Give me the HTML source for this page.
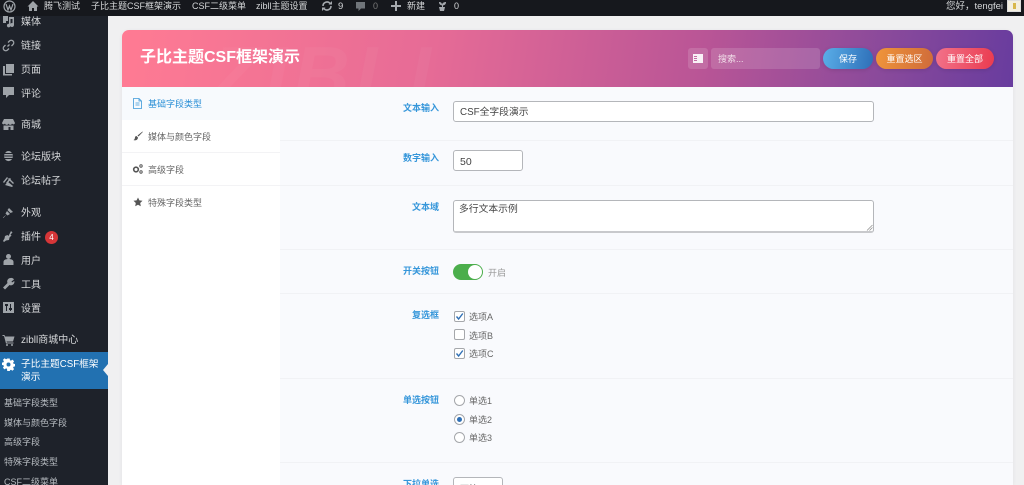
<!DOCTYPE html>
<html lang="zh"><head><meta charset="utf-8"><title>子比主题CSF框架演示</title>
<style>
*{box-sizing:border-box}
html,body{margin:0;padding:0;width:1024px;height:485px;overflow:hidden}
body{position:relative;background:#f0f0f1;font-family:"Liberation Sans","Noto Sans CJK SC",sans-serif;font-size:9.5px;color:#444}
#wrap{position:absolute;left:0;top:0;width:1024px;height:485px;overflow:hidden;filter:blur(.3px)}
.a{position:absolute;white-space:nowrap}
#bar{left:0;top:0;width:1024px;height:16px;background:#16181d;overflow:hidden}
#bar .a{color:#d4d6d8;font-size:9px;line-height:13px;top:0}
#side{left:0;top:16px;width:108px;height:469px;background:#1e222a;overflow:hidden}
.m{left:21px;color:#d5d7d9;font-size:10px;line-height:14px;margin-top:2px}
.ic{position:absolute;left:2px;width:13px;height:13px;fill:#9ea3a8}
.s{left:4px;color:#b6bbc0;font-size:9px;line-height:13px}
#panel{left:122px;top:30px;width:891px;height:455px;background:#f9fafd;border-radius:7px 7px 0 0;overflow:hidden;box-shadow:0 1px 4px rgba(0,0,0,.06)}
#head{left:0;top:0;width:891px;height:57px;background:linear-gradient(99deg,#ff7b93 0%,#e66b96 35%,#b95596 65%,#8a4a9b 85%,#683c9e 100%);overflow:hidden}
#nav{left:0;top:57px;width:158px;height:400px;background:#fff}
.n{left:26px;font-size:9px;line-height:13px;color:#666;margin-top:1px}
.l{right:0;font-size:9px;font-weight:bold;color:#3596da;line-height:13px;text-align:right;margin-top:1px}
.in{background:#fff;border:1px solid #b4b6ba;border-radius:3px;color:#444;font-size:9.8px;position:absolute}
.sep{left:158px;width:733px;height:1px;background:#f1f2f5}
.opt{left:347px;font-size:9px;color:#666;line-height:13px;margin-top:1px}
.cb{position:absolute;left:332px;width:11px;height:11px;background:#fff;border:1px solid #a5a7ab;border-radius:2px}
.cb svg{position:absolute;left:0;top:0}
.rd{position:absolute;left:332px;width:11px;height:11px;background:#fff;border:1px solid #a5a7ab;border-radius:50%}
.btn{height:21px;top:18px;border-radius:11px;color:#fff;font-size:9px;line-height:23px;text-align:center;box-shadow:0 1px 4px rgba(0,0,0,.12)}
</style></head><body><div id="wrap">

<div class="a" id="bar">
<svg class="a" style="left:3px;top:0" width="13" height="13" viewBox="0 0 13 13"><circle cx="6.500" cy="6.500" r="5.500" fill="none" stroke="#9ea3a8" stroke-width="1.200"/><path d="M3 4l2 6 1.500-4 1.500 4 2-6" fill="none" stroke="#9ea3a8" stroke-width="1.200"/></svg>
<svg class="a" style="left:27px;top:0" width="12" height="12" viewBox="0 0 12 12"><path d="M6 1L.5 6.500H2V11h3V8h2v3h3V6.500h1.500z" fill="#9ea3a8"/></svg>
<span class="a" style="left:44px">腾飞测试</span>
<span class="a" style="left:91px">子比主题CSF框架演示</span>
<span class="a" style="left:192px">CSF二级菜单</span>
<span class="a" style="left:256px">zibll主题设置</span>
<svg class="a" style="left:321px;top:0" width="12" height="12" viewBox="0 0 12 12"><path d="M2 6a4 4 0 0 1 7-2.600M10 6a4 4 0 0 1-7 2.600" fill="none" stroke="#a5a9ae" stroke-width="1.600"/><path d="M7.500 4.500h3.500V1zM4.500 7.500H1V11z" fill="#a5a9ae"/></svg>
<span class="a" style="left:338px;font-size:9.500px">9</span>
<svg class="a" style="left:355px;top:1px" width="11" height="11" viewBox="0 0 11 11"><path d="M1 1h9v6.500H6L3.500 10V7.500H1z" fill="#70757a"/></svg>
<span class="a" style="left:373px;color:#777">0</span>
<svg class="a" style="left:391px;top:1px" width="10" height="10" viewBox="0 0 10 10"><path d="M4 0h2v4h4v2H6v4H4V6H0V4h4z" fill="#a5a9ae"/></svg>
<span class="a" style="left:407px">新建</span>
<svg class="a" style="left:437px;top:1px" width="10" height="11" viewBox="0 0 10 11"><path d="M2 1c2 0 3 1 3 3C5 2 7 1 9 1c0 2-1 3-3 3.500V6h2l-1 4H3L2 6h3V4.500C3 4 2 3 2 1z" fill="#a5a9ae"/></svg>
<span class="a" style="left:454px">0</span>
<span class="a" style="left:946px;font-size:9.500px">您好，tengfei</span>
<div class="a" style="left:1007px;top:0;width:14px;height:12px;background:#f3efe0;border:1px solid #ddd"><div style="position:absolute;left:5px;top:2px;width:3px;height:6px;background:#d8b84c"></div></div>
</div>

<div class="a" id="side">
<svg class="ic" style="top:-1px" viewBox="0 0 13 13"><path d="M1 1h5v5H4v2H1zM7 2h5v8a2 2 0 1 1-1.500-1.900V4H8.500v6.500a1.800 1.800 0 1 1-1.500-1.700z"/></svg><span class="a m" style="top:-2px">媒体</span>
<svg class="ic" style="top:23px" viewBox="0 0 13 13"><path d="M5.500 7.500l2-2M6 3.500l1.500-1.500a2.400 2.400 0 0 1 3.500 3.500L9.500 7M7 9.500L5.500 11A2.400 2.400 0 0 1 2 7.500L3.500 6" fill="none" stroke="#9ea3a8" stroke-width="1.300"/></svg><span class="a m" style="top:22px">链接</span>
<svg class="ic" style="top:47px" viewBox="0 0 13 13"><path d="M4 1h8v9H4z"/><path d="M1 3h2v8h7v1.500H1z"/></svg><span class="a m" style="top:46px">页面</span>
<svg class="ic" style="top:70px" viewBox="0 0 13 13"><path d="M1 1h11v8H7l-3 3V9H1z"/></svg><span class="a m" style="top:70px">评论</span>
<svg class="ic" style="top:102px" viewBox="0 0 13 13"><path d="M2 1h9l2 4a1.600 1.600 0 0 1-3 .5 1.800 1.800 0 0 1-3.500 0 1.800 1.800 0 0 1-3.500 0 1.600 1.600 0 0 1-3-.5z"/><path d="M1.500 7.500h10V12h-3V9h-2v3h-5z"/></svg><span class="a m" style="top:101px">商城</span>
<svg class="ic" style="top:134px" viewBox="0 0 13 13"><path d="M6.500 1a4 4 0 0 1 3.300 2H3.200A4 4 0 0 1 6.500 1zM2.500 4h8l.5 1.500H2zM2 6.500h9l-.5 1.500h-8zM3 9h7a4 4 0 0 1-7 0z"/></svg><span class="a m" style="top:133px">论坛版块</span>
<svg class="ic" style="top:158px" viewBox="0 0 13 13"><path d="M1 8l4-5 1 1-4 5zM4 9l4-5 1 1-4 5zM3 11l1-1 2-2 5 4-1 1z M7 4l5 5-1 1-5-5z"/></svg><span class="a m" style="top:157px">论坛帖子</span>
<svg class="ic" style="top:190px" viewBox="0 0 13 13"><path d="M7 2l4 4-2.500 1-3-3zM5 5l3 3-2.500 1.500L4.500 8.500 1.500 12 1 11.500l3.500-3L3.500 7.500z"/></svg><span class="a m" style="top:189px">外观</span>
<svg class="ic" style="top:214px" viewBox="0 0 13 13"><path d="M9 1l1.500 1.500-2 2 1 1-2 2-.5 2.500-3 .5L2 12l-1-1 1.500-2.500L3 6l2.500-1 1 1z"/></svg><span class="a m" style="top:213px">插件</span>
<div class="a" style="left:45px;top:215px;width:13px;height:13px;border-radius:50%;background:#d63638;color:#fff;font-size:8px;line-height:13px;text-align:center">4</div>
<svg class="ic" style="top:237px" viewBox="0 0 13 13"><circle cx="6.500" cy="3.500" r="2.500"/><path d="M1.500 12V9c0-2 2-3 5-3s5 1 5 3v3z"/></svg><span class="a m" style="top:237px">用户</span>
<svg class="ic" style="top:261px" viewBox="0 0 13 13"><path d="M8.500 1a3.500 3.500 0 0 1 3.500 1.500L9.500 4.500 10 5.500 12.300 4a3.500 3.500 0 0 1-4.800 4L3 12.500 1 10.500 5.500 6A3.500 3.500 0 0 1 8.500 1z"/></svg><span class="a m" style="top:261px">工具</span>
<svg class="ic" style="top:285px" viewBox="0 0 13 13"><path fill-rule="evenodd" d="M1 1h11v11H1zM3 3v2h1v5h1V5h1V3zM8 3v4H7v2h1v1h1V9h1V7H9V3z"/></svg><span class="a m" style="top:285px">设置</span>
<svg class="ic" style="top:317px" viewBox="0 0 13 13"><path d="M.5 2h2l.5 1.500h9.500L11 8.500H4.500L5 9.500h6.500V10.500h-7.500L2 3H.5z"/><circle cx="5" cy="12" r="1"/><circle cx="10" cy="12" r="1"/></svg><span class="a m" style="top:316px">zibll商城中心</span>
<div class="a" style="left:0;top:336px;width:108px;height:37px;background:#2271b1"></div>
<svg class="ic" style="top:342px;fill:#fff" viewBox="0 0 13 13"><path fill-rule="evenodd" d="M5.300 .5h2.400l.3 1.700 1 .4 1.400-1 1.700 1.700-1 1.400.4 1 1.700.3v2.400l-1.700.3-.4 1 1 1.400-1.700 1.700-1.400-1-1 .4-.3 1.700H5.300L5 10.800l-1-.4-1.400 1-1.700-1.700 1-1.400-.4-1-1.700-.3V4.600L1.500 4.300l.4-1-1-1.400L2.600.2l1.400 1 1-.4zM6.500 4.500a2 2 0 1 0 0 4 2 2 0 0 0 0-4z"/></svg>
<div class="a" style="left:21px;top:342px;width:84px;color:#fff;font-size:9.700px;line-height:13px;white-space:normal">子比主题CSF框架演示</div>
<div class="a" style="left:103px;top:348px;width:0;height:0;border:6px solid transparent;border-left:0;border-right:5px solid #f0f0f1"></div>
<span class="a s" style="top:381px">基础字段类型</span>
<span class="a s" style="top:401px">媒体与颜色字段</span>
<span class="a s" style="top:420px">高级字段</span>
<span class="a s" style="top:440px">特殊字段类型</span>
<span class="a s" style="top:460px">CSF二级菜单</span>
</div>

<div class="a" id="panel">
<div class="a" id="head">
<div class="a" style="left:90px;top:4px;font-size:78px;font-weight:bold;font-style:italic;color:rgba(255,255,255,.035);letter-spacing:6px;line-height:80px">ZIBLL</div>
<div class="a" style="left:18px;top:17px;color:#fff;font-size:16px;font-weight:bold;line-height:22px">子比主题CSF框架演示</div>
<div class="a" style="left:566px;top:18px;width:20px;height:21px;background:rgba(255,255,255,.14);border-radius:3px"></div>
<svg class="a" style="left:571px;top:24px" width="10" height="9" viewBox="0 0 10 9"><path fill-rule="evenodd" d="M0 0h10v9H0zM4 2H1v1h3zM4 4H1v1h3zM4 6H1v1h3z" fill="#fff" opacity=".9"/></svg>
<div class="a" style="left:589px;top:18px;width:109px;height:21px;background:rgba(255,255,255,.14);border-radius:3px;color:#f1dfe9;font-size:9px;line-height:22px;padding-left:7px">搜索...</div>
<div class="a btn" style="left:701px;width:50px;background:linear-gradient(100deg,#5aaee8,#2e6fb8)">保存</div>
<div class="a btn" style="left:754px;width:57px;background:linear-gradient(100deg,#f0953a,#cf6b3a)">重置选区</div>
<div class="a btn" style="left:814px;width:58px;background:linear-gradient(100deg,#f2728a,#ea3b4f)">重置全部</div>
</div>

<div class="a" id="nav"></div>
<div class="a" style="left:0;top:57px;width:158px;height:33px;background:#f7fafd"></div>
<div class="a" style="left:0;top:122px;width:158px;height:1px;background:#f3f3f5"></div>
<div class="a" style="left:0;top:155px;width:158px;height:1px;background:#f3f3f5"></div>
<svg class="a" style="left:11px;top:68px" width="9" height="11" viewBox="0 0 9 11"><path d="M.5.5h5.500l2.500 2.500v7.500H.500zM6 .5V3h2.500M2.500 5h4M2.500 7h4" fill="none" stroke="#3a98d8" stroke-width=".8"/></svg>
<span class="a n" style="top:67px;color:#2a8fd6">基础字段类型</span>
<svg class="a" style="left:11px;top:101px" width="10" height="10" viewBox="0 0 10 10"><path d="M9.500.5L4.500 4.500l1 1L9.800 1zM3.500 5C2 5 2 6.500 1.800 7.500 1.600 8.500 1 8.800.3 9c2 .8 4.500.3 4.700-2.500z" fill="#555"/></svg>
<span class="a n" style="top:100px">媒体与颜色字段</span>
<svg class="a" style="left:10px;top:134px" width="11" height="10" viewBox="0 0 11 10"><circle cx="4" cy="5.500" r="2.300" fill="none" stroke="#555" stroke-width="1.600"/><circle cx="9" cy="2" r="1.200" fill="none" stroke="#555" stroke-width="1"/><circle cx="9" cy="8" r="1.200" fill="none" stroke="#555" stroke-width="1"/></svg>
<span class="a n" style="top:133px">高级字段</span>
<svg class="a" style="left:11px;top:167px" width="10" height="10" viewBox="0 0 10 10"><path d="M5 .5l1.400 2.900 3.100.4-2.300 2.200.6 3.200L5 7.700 2.200 9.200l.6-3.200L.5 3.800l3.100-.4z" fill="#555"/></svg>
<span class="a n" style="top:166px">特殊字段类型</span>

<div class="a l" style="left:230px;width:87px;top:71px">文本输入</div>
<div class="a in" style="left:331px;top:71px;width:421px;height:21px;line-height:20px;padding:1px 0 0 6px">CSF全字段演示</div>
<div class="a sep" style="top:110px"></div>
<div class="a l" style="left:230px;width:87px;top:121px">数字输入</div>
<div class="a in" style="left:331px;top:120px;width:70px;height:21px;line-height:20px;padding:1px 0 0 6px;font-size:10.500px">50</div>
<div class="a sep" style="top:155px"></div>
<div class="a l" style="left:230px;width:87px;top:170px">文本域</div>
<div class="a in" style="left:331px;top:170px;width:421px;height:33px;line-height:17px;padding-left:5px;border-bottom:2px solid #c8c9cc">多行文本示例
<svg style="position:absolute;right:0;bottom:0" width="7" height="7" viewBox="0 0 7 7"><path d="M1 6.500L6.500 1M3.500 6.500L6.500 3.500" stroke="#888" stroke-width=".7"/></svg></div>
<div class="a sep" style="top:219px"></div>
<div class="a l" style="left:230px;width:87px;top:234px">开关按钮</div>
<div class="a" style="left:331px;top:234px;width:30px;height:16px;border-radius:8px;background:#4cae4c"></div>
<div class="a" style="left:346px;top:235px;width:14px;height:14px;border-radius:50%;background:#fff"></div>
<span class="a" style="left:366px;top:237px;font-size:9px;line-height:13px;color:#999">开启</span>
<div class="a sep" style="top:263px"></div>
<div class="a l" style="left:230px;width:87px;top:278px">复选框</div>
<div class="cb" style="top:281px"><svg width="9" height="9" viewBox="0 0 9 9"><path d="M1.500 4.500L3.600 7 7.800 1.500" fill="none" stroke="#2f6fb5" stroke-width="1.400"/></svg></div><span class="a opt" style="top:280px">选项A</span>
<div class="cb" style="top:299px"></div><span class="a opt" style="top:299px">选项B</span>
<div class="cb" style="top:318px"><svg width="9" height="9" viewBox="0 0 9 9"><path d="M1.500 4.500L3.600 7 7.800 1.500" fill="none" stroke="#2f6fb5" stroke-width="1.400"/></svg></div><span class="a opt" style="top:317px">选项C</span>
<div class="a sep" style="top:348px"></div>
<div class="a l" style="left:230px;width:87px;top:363px">单选按钮</div>
<div class="rd" style="top:365px"></div><span class="a opt" style="top:364px">单选1</span>
<div class="rd" style="top:384px"><div style="position:absolute;left:2px;top:2px;width:5px;height:5px;border-radius:50%;background:#2f6fb5"></div></div><span class="a opt" style="top:383px">单选2</span>
<div class="rd" style="top:402px"></div><span class="a opt" style="top:401px">单选3</span>
<div class="a sep" style="top:432px"></div>
<div class="a l" style="left:230px;width:87px;top:447px">下拉单选</div>
<div class="a in" style="left:331px;top:447px;width:50px;height:21px;line-height:20px;padding:1px 0 0 6px;font-size:9px">下拉A</div>
</div>
</div></body></html>
